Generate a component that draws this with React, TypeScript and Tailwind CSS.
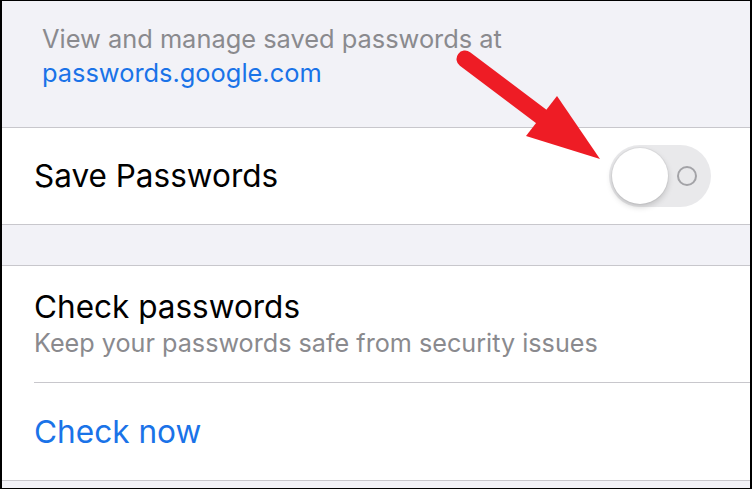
export default function App() {
  return (
    <div
      className="relative w-[752px] h-[489px] overflow-hidden bg-[#f2f2f7] border-black border-l-2 border-r-2 border-t border-b"
      style={{ fontFamily: 'Inter, "Noto Sans", sans-serif' }}
    >
      {/* footer text of the section above */}
      <div className="h-[126px] pl-[40px] pt-[21px] text-[25.4px] leading-[34px]">
        <p className="text-[#8a8a8e]">View and manage saved passwords at</p>
        <p className="text-[#1a73e8]">passwords.google.com</p>
      </div>

      <div className="h-[98px] flex items-center justify-between bg-white border-y border-[#c8c7cc] pl-[32px] pr-[39px]">
        <span className="text-[31.5px] text-black">Save Passwords</span>
        <div className="relative w-[102px] h-[62px] rounded-full bg-[#e9e9eb]">
          <div className="absolute left-[3px] top-[3px] w-[56px] h-[56px] rounded-full bg-white shadow-[0_3px_6px_rgba(0,0,0,0.18),0_0_0_1px_rgba(0,0,0,0.04)]" />
          <div className="absolute left-[68px] top-[21px] w-[20px] h-[20px] rounded-full border-2 border-[#a3a3a7]" />
        </div>
      </div>

      <div className="h-[40px]" />

      <div className="bg-white border-y border-[#c8c7cc] pl-[32px]">
        <div className="h-[117px] flex flex-col justify-center border-b border-[#c8c7cc]">
          <span className="text-[31.5px] leading-[38px] text-black">Check passwords</span>
          <span className="text-[25.2px] leading-[34px] text-[#8a8a8e]">
            Keep your passwords safe from security issues
          </span>
        </div>
        <div className="h-[97px] flex items-center">
          <span className="text-[31.6px] text-[#1a73e8]">Check now</span>
        </div>
      </div>

      {/* annotation arrow */}
      <svg className="absolute left-0 top-0" width="752" height="489" viewBox="0 0 752 489">
        <line x1="463" y1="58" x2="540" y2="116" stroke="#ee1c25" strokeWidth="17" strokeLinecap="round" />
        <polygon points="555,95 524,135 598,158" fill="#ee1c25" />
      </svg>
    </div>
  )
}
